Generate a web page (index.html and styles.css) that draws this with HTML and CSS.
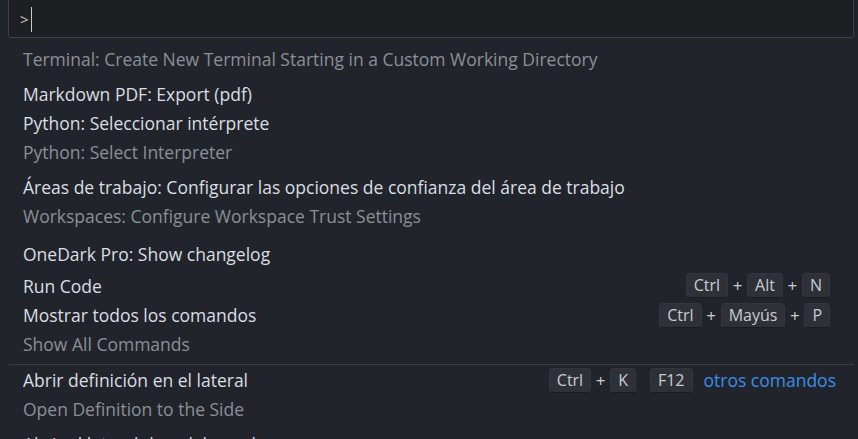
FILE: index.html
```html
<!DOCTYPE html>
<html lang="es">
<head>
<meta charset="utf-8">
<title>Command Palette</title>
<link rel="stylesheet" href="styles.css">
</head>
<body>
<div class="palette">
  <div class="input-box">
    <span class="prompt">&gt;</span><span class="caret"></span>
  </div>
  <div class="list">
    <div class="row tail">
      <div class="detail">Terminal: Create New Terminal Starting in a Custom Working Directory</div>
    </div>
    <div class="row single">
      <div class="label">Markdown PDF: Export (pdf)</div>
    </div>
    <div class="row double">
      <div class="label">Python: Seleccionar intérprete</div>
      <div class="detail">Python: Select Interpreter</div>
    </div>
    <div class="row double">
      <div class="label">Áreas de trabajo: Configurar las opciones de confianza del área de trabajo</div>
      <div class="detail">Workspaces: Configure Workspace Trust Settings</div>
    </div>
    <div class="row single">
      <div class="label">OneDark Pro: Show changelog</div>
    </div>
    <div class="row single">
      <div class="label">Run Code</div>
      <div class="keys"><span class="kbd">Ctrl</span><span class="plus">+</span><span class="kbd">Alt</span><span class="plus">+</span><span class="kbd">N</span></div>
    </div>
    <div class="row double">
      <div class="line">
        <div class="label">Mostrar todos los comandos</div>
        <div class="keys"><span class="kbd">Ctrl</span><span class="plus">+</span><span class="kbd">Mayús</span><span class="plus">+</span><span class="kbd">P</span></div>
      </div>
      <div class="detail">Show All Commands</div>
    </div>
    <div class="row double separated">
      <div class="line">
        <div class="label">Abrir definición en el lateral</div>
        <div class="keys"><span class="kbd">Ctrl</span><span class="plus">+</span><span class="kbd">K</span><span class="chord"></span><span class="kbd">F12</span><span class="group-label">otros comandos</span></div>
      </div>
      <div class="detail">Open Definition to the Side</div>
    </div>
    <div class="row double">
      <div class="label">Abrir el lateral de palabras clave</div>
    </div>
  </div>
</div>
</body>
</html>
```
FILE: styles.css
```css
* { box-sizing: border-box; }
html, body {
  margin: 0;
  padding: 0;
  background: #21252b;
  width: 858px;
  height: 439px;
  overflow: hidden;
}
.palette {
  font-family: "Open Sans", "Noto Sans", sans-serif;
  font-size: 17.5px;
  color: #dadde2;
  display: flex;
  flex-direction: column;
  height: 439px;
}
.input-box {
  margin: -2px 4px 0 8px;
  height: 40px;
  background: #1d1f23;
  border: 1px solid #3c404a;
  border-radius: 3px;
  display: flex;
  align-items: center;
  padding-left: 11px;
  flex: none;
}
.prompt {
  color: #c3c6cc;
  font-size: 15px;
  line-height: 20px;
  margin-top: 2px;
}
.caret {
  width: 1px;
  height: 25px;
  background: #c8c8c8;
  margin-left: 2px;
  margin-top: 2px;
}
.list {
  flex: 1;
  overflow: hidden;
  display: flex;
  flex-direction: column;
}
.row {
  margin: 0 4px 0 9px;
  padding: 0 24px 0 14px;
  flex: none;
}
.row.tail {
  height: 38px;
  padding-top: 6px;
}
.row.single {
  height: 32px;
  padding-top: 3px;
  display: flex;
  align-items: center;
  justify-content: space-between;
}
.row.double {
  height: 64px;
  padding-top: 1px;
}
.row.separated { border-top: 1px solid #3a3e46; height: 65px; }
.line {
  display: flex;
  align-items: center;
  justify-content: space-between;
  height: 28px;
}
.row.double > .label { height: 28px; line-height: 28px; }
.label { white-space: nowrap; line-height: 26px; }
.detail {
  color: #8b8f96;
  line-height: 30px;
  height: 30px;
  white-space: nowrap;
}
.keys {
  display: flex;
  align-items: center;
  flex: none;
}
.kbd {
  display: inline-block;
  height: 25px;
  line-height: 23px;
  padding: 0 7px;
  background: #2e3137;
  border: 1px solid #33363d;
  border-bottom-color: #1a1c20;
  border-radius: 4px;
  color: #c9ccd1;
  font-size: 16px;
}
.plus {
  color: #c9ccd1;
  width: 19px;
  text-align: center;
  font-size: 17px;
}
.chord { width: 14px; }
.group-label {
  color: #3b8eea;
  margin-left: 11px;
  margin-right: -6px;
  font-size: 17.5px;
}
```
